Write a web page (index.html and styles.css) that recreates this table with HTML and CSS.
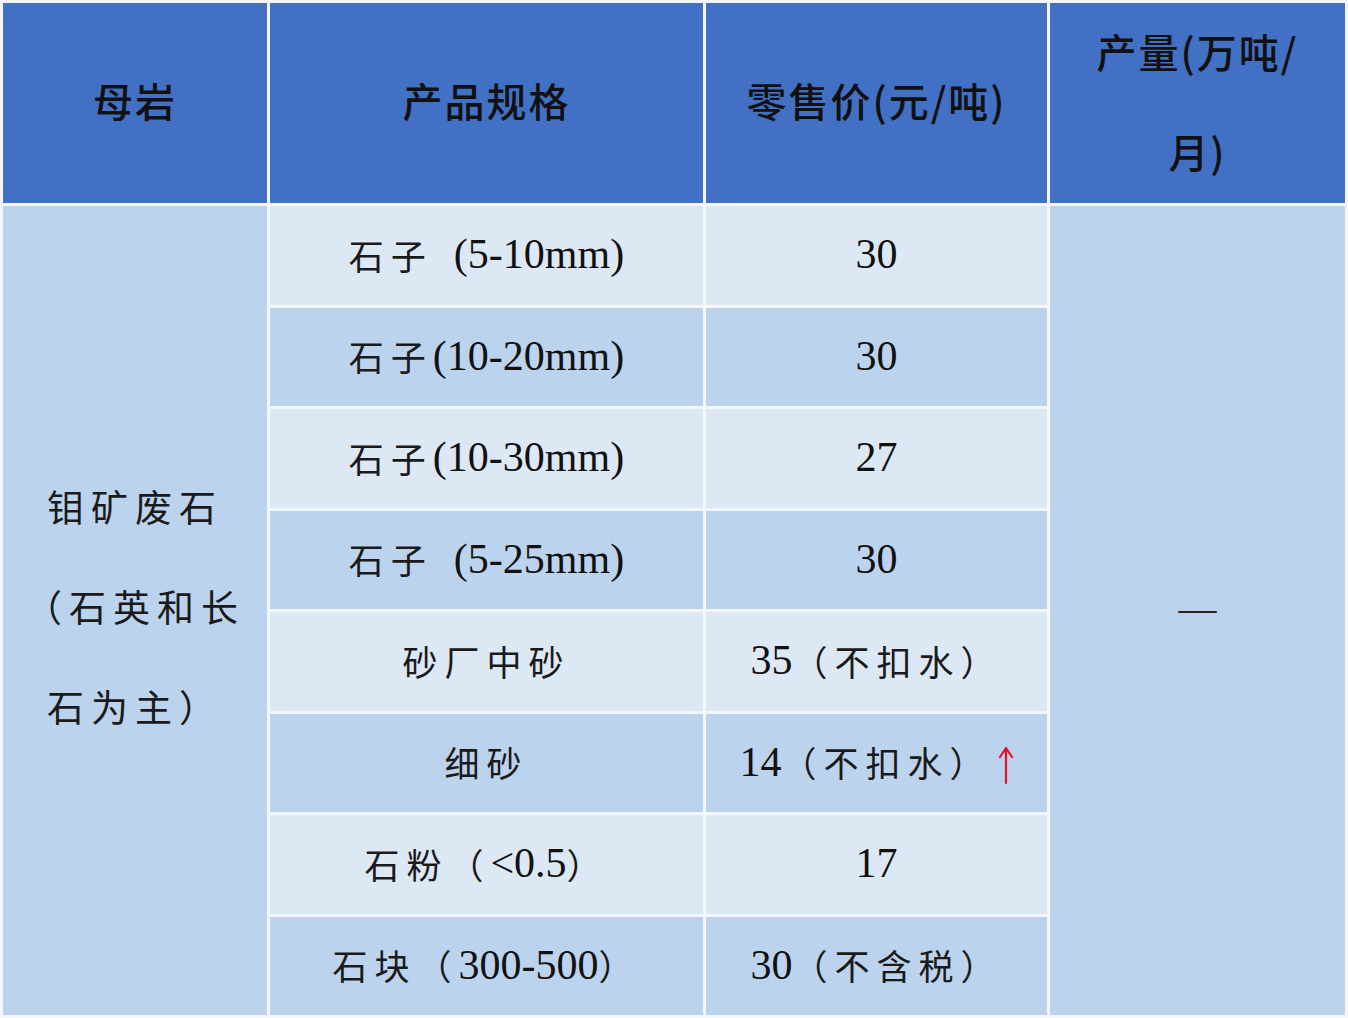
FILE: index.html
```html
<!DOCTYPE html>
<html lang="zh">
<head>
<meta charset="utf-8">
<title>钼矿废石产品价格</title>
<link rel="stylesheet" href="styles.css">
</head>
<body>
<div class="table">
  <div class="th">母岩</div>
  <div class="th">产品规格</div>
  <div class="th">零售价(元/吨)</div>
  <div class="th th-wrap">产量(万吨/<br>月)</div>

  <div class="rock"><span class="cj">钼矿废石</span><span class="cj paren">（石英和长</span><span class="cj">石为主）</span></div>

  <div class="td light"><span class="cj">石子</span>&nbsp;&nbsp;(5-10mm)</div>
  <div class="td light">30</div>

  <div class="td dark"><span class="cj">石子</span>(10-20mm)</div>
  <div class="td dark">30</div>

  <div class="td light"><span class="cj">石子</span>(10-30mm)</div>
  <div class="td light">27</div>

  <div class="td dark"><span class="cj">石子</span>&nbsp;&nbsp;(5-25mm)</div>
  <div class="td dark">30</div>

  <div class="td light"><span class="cj">砂厂中砂</span></div>
  <div class="td light">35<span class="cj">（不扣水）</span></div>

  <div class="td dark"><span class="cj">细砂</span></div>
  <div class="td dark">14<span class="cj">（不扣水）</span><svg class="arrow" width="16" height="40" viewBox="0 0 16 40"><path d="M8 38 V3 M2 12 L8 3 L14 12" fill="none" stroke="#e8102a" stroke-width="2.2" stroke-linecap="round" stroke-linejoin="round"/></svg></div>

  <div class="td light"><span class="cj">石粉（</span>&lt;0.5<span class="cj">）</span></div>
  <div class="td light">17</div>

  <div class="td dark"><span class="cj">石块（</span>300-500<span class="cj">）</span></div>
  <div class="td dark">30<span class="cj">（不含税）</span></div>

  <div class="output">—</div>
</div>
</body>
</html>
```

FILE: styles.css
```css
html, body {
  margin: 0;
  padding: 0;
  background: #ffffff;
}

.table {
  display: grid;
  grid-template-columns: 264px 433px 341px 295px;
  grid-template-rows: 200px repeat(8, 98.5px);
  gap: 3px;
  padding: 3px;
  width: 1342px;
  background: #f4f7fb;
}

.th {
  background: #4170c4;
  color: #111;
  font-family: "Noto Sans CJK SC", "Noto Sans", sans-serif;
  font-weight: 500;
  font-size: 40px;
  letter-spacing: 2px;
  display: flex;
  align-items: center;
  justify-content: center;
  text-align: center;
  padding-bottom: 6px;
}

.th-wrap {
  line-height: 100px;
  padding-bottom: 4px;
}

.td {
  display: flex;
  align-items: center;
  justify-content: center;
  font-family: "Liberation Serif", "Noto Sans CJK SC", serif;
  font-size: 42px;
  color: #111;
  white-space: nowrap;
  padding-bottom: 2px;
}

.light { background: #dde8f5; }
.dark { background: #bcd3ee; }

.td:nth-child(odd) { grid-column: 3; }

.cj {
  font-family: "Noto Sans CJK SC", sans-serif;
  font-size: 35px;
  font-weight: 400;
  letter-spacing: 7px;
  color: #1a1a1a;
}

.rock {
  grid-column: 1;
  grid-row: 2 / span 8;
  background: #bcd3ee;
  display: flex;
  flex-direction: column;
  justify-content: center;
  padding-left: 44px;
  line-height: 100px;
  padding-bottom: 10px;
}

.rock .cj {
  font-size: 37px;
  letter-spacing: 7px;
  white-space: nowrap;
}

.rock .paren {
  margin-left: -22px;
}

.output {
  grid-column: 4;
  grid-row: 2 / span 8;
  background: #bcd3ee;
  display: flex;
  align-items: center;
  justify-content: center;
  font-family: "Liberation Serif", serif;
  font-size: 38px;
  color: #222;
  padding-bottom: 6px;
}

.arrow {
  margin-left: 6px;
  margin-top: 6px;
}
```
